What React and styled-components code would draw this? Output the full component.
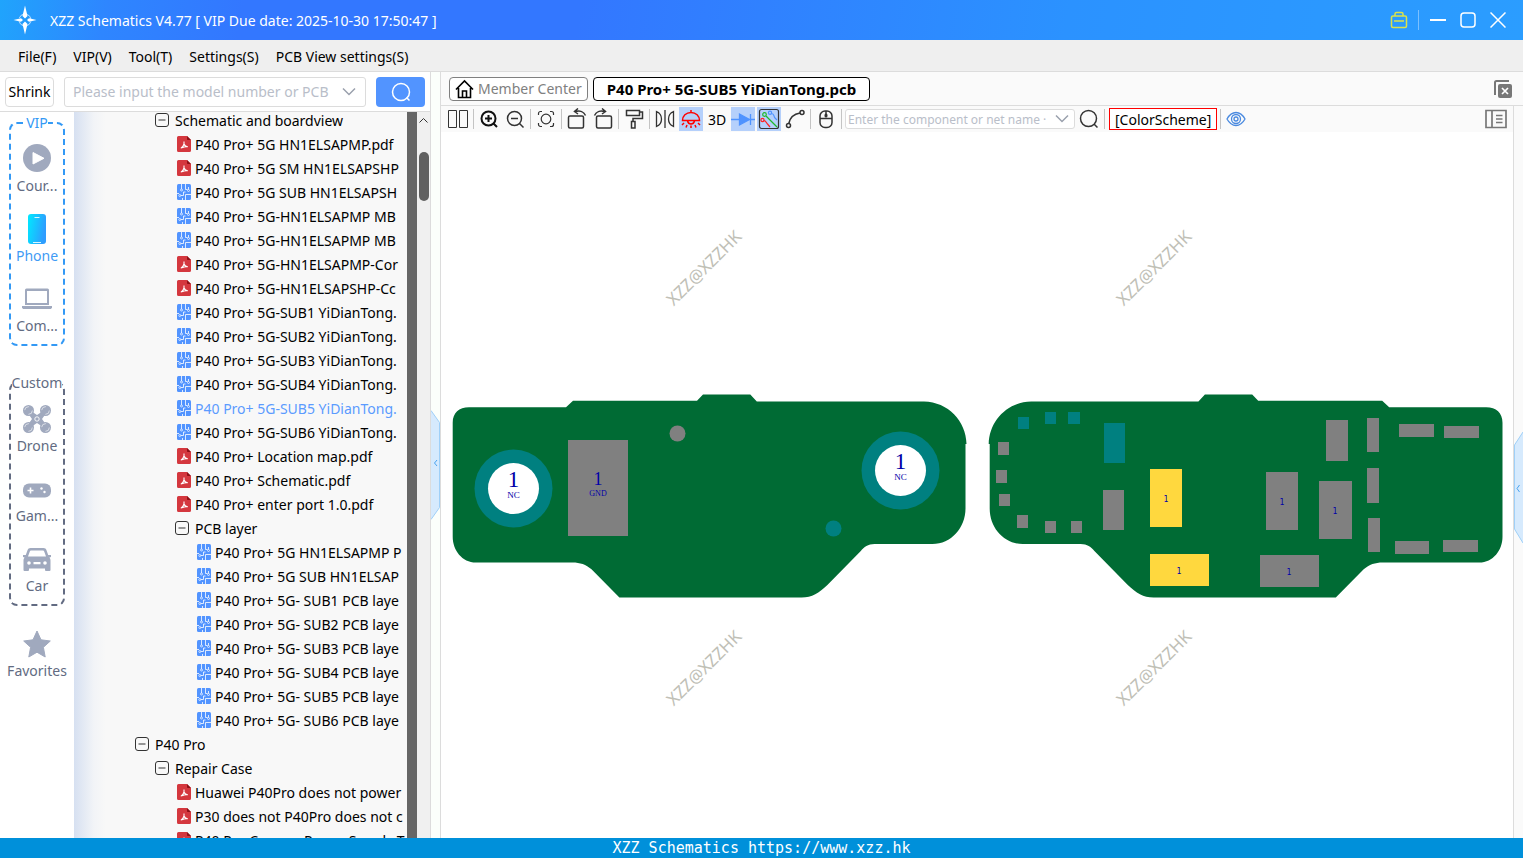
import React, { useState } from 'react';
import styled, { createGlobalStyle, css } from 'styled-components';

const COLORS = {
  primary: '#5294ff',
  selected: '#5b9bff',
  line: '#dcdcdc',
  panel: '#f8f8f8',
  rail: '#a0a9be',
  railText: '#626b82',
  board: '#006b34',
  pad: '#808080',
  teal: '#008080',
  yellow: '#ffd83e',
  pin: '#0000a8',
};

const GlobalStyle = createGlobalStyle`
  * { box-sizing: border-box; }
  body {
    margin: 0;
    font-family: 'Noto Sans', 'Open Sans', sans-serif;
    font-size: 14px;
    color: #000;
  }
  button, input {
    font-family: inherit;
    font-size: inherit;
    color: inherit;
  }
  svg { display: block; flex: none; }
`;

const Page = styled.div`
  height: 100vh;
  display: flex;
  flex-direction: column;
  overflow: hidden;
  background: #fff;
`;

const TitleBar = styled.header`
  height: 40px;
  flex: none;
  display: flex;
  align-items: center;
  padding: 0 14px 0 10px;
  background: linear-gradient(100deg, #20a4fc 0%, #2e86ff 7%, #3377ff 16%, #3377ff 38%, #2b92ff 70%, #2b9dff 100%);
  color: #fff;
`;

const AppTitle = styled.h1`
  flex: 1;
  margin: 0 0 0 10px;
  font-size: 14px;
  font-weight: 400;
`;

const WindowBtns = styled.div`
  display: flex;
  align-items: center;
  gap: 8px;
`;

const WindowBtn = styled.button`
  width: 22px;
  height: 24px;
  padding: 0;
  border: 0;
  background: transparent;
  display: grid;
  place-items: center;
`;

const WindowSep = styled.span`
  width: 1px;
  height: 20px;
  background: #7cc0ff;
`;

const MenuBar = styled.nav`
  height: 32px;
  flex: none;
  display: flex;
  align-items: center;
  gap: 17px;
  padding: 2px 18px 0;
  background: #efefef;
  border-bottom: 1px solid ${COLORS.line};
`;

const MenuItem = styled.button`
  padding: 0;
  border: 0;
  background: transparent;
`;

const Body = styled.div`
  flex: 1;
  min-height: 0;
  display: flex;
`;

const Side = styled.aside`
  width: 431px;
  flex: none;
  display: flex;
  flex-direction: column;
  border-right: 1px solid ${COLORS.line};
`;

const SearchRow = styled.form`
  height: 40px;
  flex: none;
  display: flex;
  align-items: center;
  gap: 10px;
  padding: 0 5px;
  border-bottom: 1px solid ${COLORS.line};
`;

const ShrinkBtn = styled.button`
  width: 49px;
  height: 30px;
  padding: 0;
  border: 1px solid ${COLORS.line};
  border-radius: 4px;
  background: #fff;
`;

const Combo = styled.label`
  display: flex;
  align-items: center;
  flex: ${p => (p.$small ? 'none' : 1)};
  width: ${p => (p.$small ? '230px' : 'auto')};
  min-width: 0;
  height: ${p => (p.$small ? '20px' : '30px')};
  padding: ${p => (p.$small ? '0 5px 0 2px' : '0 9px 0 8px')};
  font-size: ${p => (p.$small ? '12px' : '14px')};
  gap: ${p => (p.$small ? '5px' : '6px')};
  border: 1px solid ${COLORS.line};
  border-radius: 3px;
  background: #fff;
`;

const ComboInput = styled.input`
  flex: 1;
  min-width: 0;
  padding: 0;
  border: 0;
  outline: 0;
  background: transparent;

  &::placeholder {
    color: #b9bec9;
    opacity: 1;
  }
`;

const SearchBtn = styled.button`
  width: 49px;
  height: 30px;
  padding: 0;
  border: 0;
  border-radius: 4px;
  background: ${COLORS.primary};
  display: grid;
  place-items: center;
`;

const SideBody = styled.div`
  flex: 1;
  min-height: 0;
  display: flex;
`;

const Rail = styled.nav`
  width: 74px;
  flex: none;
  display: flex;
  flex-direction: column;
  align-items: center;
`;

const RailGroup = styled.fieldset`
  width: 56px;
  min-width: 0;
  margin: 0 0 26px;
  padding: 0;
  border: 2px dashed ${p => p.$color};
  border-radius: 8px;
  color: ${p => p.$color};

  & + & {
    margin-bottom: 13px;
  }
`;

const RailLegend = styled.legend`
  height: 22px;
  margin: 0 auto;
  padding: 0;
  line-height: 22px;
`;

const RailItem = styled.button`
  width: 100%;
  height: 70px;
  padding: 10px 0 0;
  border: 0;
  background: transparent;
  display: flex;
  flex-direction: column;
  align-items: center;
  line-height: 24px;
  white-space: nowrap;
  color: ${p => (p.$active ? '#3f9bf5' : COLORS.railText)};
`;

const Tree = styled.div`
  flex: 1;
  min-width: 0;
  overflow: hidden;
  background: linear-gradient(90deg, #d6e0f1 0, #e4eaf4 10px, #f2f4f7 20px, ${COLORS.panel} 32px);
`;

const TreeList = styled.ul`
  margin: -4px 1px 0 0;
  padding: 0;
  list-style: none;
  overflow: hidden;
`;

const TreeRow = styled.li`
  height: 24px;
  padding-left: ${p => 61 + p.$level * 20}px;
  display: flex;
  align-items: center;
  gap: 4px;
  white-space: nowrap;
  cursor: pointer;
  color: ${p => (p.$active ? COLORS.selected : '#000')};
`;

const TreeIcon = styled.span`
  width: 16px;
  flex: none;
  display: flex;
  justify-content: ${p => (p.$folder ? 'flex-start' : 'flex-end')};
`;

const Splitter = styled.div`
  width: 10px;
  flex: none;
  background: #666;
`;

const ScrollTrack = styled.div`
  width: 13px;
  flex: none;
  display: flex;
  flex-direction: column;
  align-items: center;
  gap: 29px;
  padding-top: 6px;
  background: #f0f0f0;
`;

const ScrollThumb = styled.div`
  width: 10px;
  height: 49px;
  border-radius: 5px;
  background: #606060;
`;

const Gap = styled.div`
  position: relative;
  width: 9px;
  flex: none;
  background: ${p => (p.$right ? '#fafafa' : '#fbfffb')};
`;

const Handle = styled.button`
  position: absolute;
  top: ${p => (p.$right ? '326px' : '338px')};
  left: 0;
  padding: 0;
  border: 0;
  background: transparent;
`;

const Main = styled.main`
  flex: 1;
  min-width: 0;
  display: flex;
  flex-direction: column;
  border-left: 1px solid ${COLORS.line};
`;

const TabRow = styled.div`
  height: 34px;
  flex: none;
  display: flex;
  align-items: center;
  gap: 5px;
  padding: 0 10px 0 8px;
  background: #fafafa;
  border-bottom: 1px solid ${COLORS.line};
`;

const Tab = styled.button`
  height: 24px;
  padding: 0 5px;
  display: flex;
  align-items: center;
  gap: 4px;
  border: 1px solid #808080;
  border-radius: 4px;
  background: #fff;
  color: #808080;

  ${p => p.$active && css`
    padding: 0 13px;
    border-color: #000;
    color: #000;
    font-size: 15px;
    font-weight: 700;
  `}
`;

const PlainBtn = styled.button`
  margin-left: auto;
  padding: 0;
  border: 0;
  background: transparent;
`;

const Work = styled.div`
  flex: 1;
  min-height: 0;
  display: flex;
`;

const View = styled.section`
  flex: 1;
  min-width: 0;
  display: flex;
  flex-direction: column;
  border-right: 1px solid ${COLORS.line};
`;

const ToolBar = styled.div`
  height: 26px;
  flex: none;
  display: flex;
  align-items: center;
  gap: 2px;
  padding: 0 5px;
  background: #fafafa;
`;

const Tool = styled.button`
  width: 24px;
  height: 24px;
  flex: none;
  padding: 0;
  border: 0;
  display: grid;
  place-items: center;
  margin-left: ${p => (p.$end ? 'auto' : 0)};
  background: ${p => (p.$on ? '#b5d0fb' : 'transparent')};
`;

const ToolSep = styled.span`
  width: 1px;
  height: 20px;
  flex: none;
  margin: 0 1px;
  background: #c4c4c4;
`;

const SchemeBtn = styled.button`
  height: 22px;
  flex: none;
  margin-left: 1px;
  padding: 0 5px;
  border: 1px solid #f00;
  background: #fff;
`;

const Canvas = styled.svg`
  flex: 1;
  width: 100%;
  min-height: 0;
`;

const Footer = styled.footer`
  height: 20px;
  flex: none;
  display: grid;
  place-items: center;
  padding-top: 1px;
  background: #0090da;
  color: #fff;
  font-family: 'DejaVu Sans Mono', monospace;
  font-size: 15px;
  line-height: 19px;
`;

// names are cut to the width of the list
const ROWS = [
  { level: 1, type: 'folder', text: 'Schematic and boardview' },
  { level: 2, type: 'pdf', text: 'P40 Pro+ 5G HN1ELSAPMP.pdf' },
  { level: 2, type: 'pdf', text: 'P40 Pro+ 5G SM HN1ELSAPSHP' },
  { level: 2, type: 'pcb', text: 'P40 Pro+ 5G SUB HN1ELSAPSH' },
  { level: 2, type: 'pcb', text: 'P40 Pro+ 5G-HN1ELSAPMP MB' },
  { level: 2, type: 'pcb', text: 'P40 Pro+ 5G-HN1ELSAPMP MB' },
  { level: 2, type: 'pdf', text: 'P40 Pro+ 5G-HN1ELSAPMP-Cor' },
  { level: 2, type: 'pdf', text: 'P40 Pro+ 5G-HN1ELSAPSHP-Cc' },
  { level: 2, type: 'pcb', text: 'P40 Pro+ 5G-SUB1 YiDianTong.' },
  { level: 2, type: 'pcb', text: 'P40 Pro+ 5G-SUB2 YiDianTong.' },
  { level: 2, type: 'pcb', text: 'P40 Pro+ 5G-SUB3 YiDianTong.' },
  { level: 2, type: 'pcb', text: 'P40 Pro+ 5G-SUB4 YiDianTong.' },
  { level: 2, type: 'pcb', text: 'P40 Pro+ 5G-SUB5 YiDianTong.' },
  { level: 2, type: 'pcb', text: 'P40 Pro+ 5G-SUB6 YiDianTong.' },
  { level: 2, type: 'pdf', text: 'P40 Pro+ Location map.pdf' },
  { level: 2, type: 'pdf', text: 'P40 Pro+ Schematic.pdf' },
  { level: 2, type: 'pdf', text: 'P40 Pro+ enter port 1.0.pdf' },
  { level: 2, type: 'folder', text: 'PCB layer' },
  { level: 3, type: 'pcb', text: 'P40 Pro+ 5G HN1ELSAPMP P' },
  { level: 3, type: 'pcb', text: 'P40 Pro+ 5G SUB HN1ELSAP' },
  { level: 3, type: 'pcb', text: 'P40 Pro+ 5G- SUB1 PCB laye' },
  { level: 3, type: 'pcb', text: 'P40 Pro+ 5G- SUB2 PCB laye' },
  { level: 3, type: 'pcb', text: 'P40 Pro+ 5G- SUB3 PCB laye' },
  { level: 3, type: 'pcb', text: 'P40 Pro+ 5G- SUB4 PCB laye' },
  { level: 3, type: 'pcb', text: 'P40 Pro+ 5G- SUB5 PCB laye' },
  { level: 3, type: 'pcb', text: 'P40 Pro+ 5G- SUB6 PCB laye' },
  { level: 0, type: 'folder', text: 'P40 Pro' },
  { level: 1, type: 'folder', text: 'Repair Case' },
  { level: 2, type: 'pdf', text: 'Huawei P40Pro does not power' },
  { level: 2, type: 'pdf', text: 'P30 does not P40Pro does not c' },
  { level: 2, type: 'pdf', text: 'P40 Pro Camera Power Supply T' },
];

const rowIcons = {
  folder: (
    <svg width="14" height="14" viewBox="0 0 14 14" fill="none" stroke="#333">
      <rect x="0.5" y="0.5" width="13" height="13" rx="2.5" />
      <path d="M3.5 7h7" />
    </svg>
  ),
  pdf: (
    <svg width="14" height="16" viewBox="0 0 14 16" fill="none">
      <path d="M1.5 0H10l4 4v10.500a1.500 1.500 0 0 1-1.500 1.500h-11A1.500 1.500 0 0 1 0 14.500v-13A1.500 1.500 0 0 1 1.500 0z" fill="#d4373e" />
      <path d="M10 0l4 4h-3.200A.8.8 0 0 1 10 3.200z" fill="#8c1016" />
      <path d="M7 5.500v2.500c-.5 1.800-1.800 3.600-3.200 4.200M7 8c.6 1.500 1.900 2.800 3.800 2.800-2-.3-4.200.1-5.600 1" stroke="#fff" strokeWidth="1.100" />
    </svg>
  ),
  pcb: (
    <svg width="14" height="16" viewBox="0 0 14 16" fill="none">
      <rect width="14" height="16" rx="1.500" fill={COLORS.primary} />
      <path d="M4.500 0v5M8.500 0v5.500h2M0 9.500h2M3.800 11.500h2.700V8h2M8.500 16v-5.500h5.500M11.500 5.500V3M5.500 16v-2" stroke="#fff" strokeWidth="0.800" />
      <circle cx="4.500" cy="6" r="1" stroke="#fff" strokeWidth="0.700" />
      <circle cx="2.800" cy="11.500" r="1" stroke="#fff" strokeWidth="0.700" />
      <circle cx="11.500" cy="6.500" r="1" stroke="#fff" strokeWidth="0.700" />
    </svg>
  ),
};

const railIcons = {
  course: (
    <svg width="28" height="30" viewBox="0 0 28 30">
      <circle cx="14" cy="14" r="14" fill={COLORS.rail} />
      <path d="M10 8.500v11.500l11-5.700z" fill="#fff" stroke="#fff" strokeLinejoin="round" />
    </svg>
  ),
  phone: (
    <svg width="18" height="30" viewBox="0 0 18 30">
      <defs>
        <linearGradient id="phoneFill" x1="0" y1="0" x2="1" y2="0.300">
          <stop offset="0" stopColor="#00eaff" />
          <stop offset="1" stopColor="#2e9dff" />
        </linearGradient>
      </defs>
      <rect width="18" height="30" rx="3" fill="url(#phoneFill)" />
      <path d="M6.500 3.500h5M5 28.500h8" stroke="#d8f7ff" />
    </svg>
  ),
  computer: (
    <svg width="30" height="30" viewBox="0 0 30 30">
      <path d="M3 6a1.500 1.500 0 0 1 1.500-1.500h21A1.500 1.500 0 0 1 27 6v15H3zM5 7v12h20V7z" fill={COLORS.rail} fillRule="evenodd" />
      <path d="M0 22h30v1.500l-1 1.500H1L0 23.500z" fill={COLORS.rail} />
    </svg>
  ),
  drone: (
    <svg width="28" height="30" viewBox="0 0 28 30" fill={COLORS.rail}>
      <path d="M5 5l9 6 9-6 1 3-5 7 5 7-1 3-9-6-9 6-1-3 5-7-5-7z" />
      {[[5.5, 6.5], [22.5, 6.5], [5.5, 23.5], [22.5, 23.5]].map(([x, y]) => (
        <g key={`${x}-${y}`}>
          <circle cx={x} cy={y} r="5.500" />
          <circle cx={x} cy={y} r="3.800" fill="none" stroke="#fff" strokeWidth="0.600" strokeDasharray="6 6" />
        </g>
      ))}
      <circle cx="14" cy="15" r="2.200" fill="none" stroke="#fff" strokeWidth="0.900" />
    </svg>
  ),
  game: (
    <svg width="28" height="30" viewBox="0 0 28 30">
      <rect y="9.500" width="28" height="14" rx="6" fill={COLORS.rail} />
      <path d="M4.500 16.500h6M7.500 13.500v6" stroke="#fff" strokeWidth="1.600" />
      <circle cx="18.500" cy="14.500" r="1.200" fill="#fff" />
      <circle cx="21.500" cy="18" r="1.200" fill="#fff" />
    </svg>
  ),
  car: (
    <svg width="28" height="30" viewBox="0 -1 28 30" fill={COLORS.rail}>
      <path fillRule="evenodd" d="M7.500 3h13c1.500 0 2.500.8 3 2.200L25.200 10H28v2l-1.500.6c.5.900 1 1.700 1 2.900V25a1 1 0 0 1-1 1H23a1 1 0 0 1-1-1v-1.500H6V25a1 1 0 0 1-1 1H1.500a1 1 0 0 1-1-1v-9.500c0-1.200.5-2 1-2.900L0 12v-2h2.800l1.700-4.800C5 3.800 6 3 7.500 3zm.5 2.500c-.6 0-1 .3-1.200.9L5 11.500h18l-1.800-5.100c-.2-.6-.6-.9-1.200-.9zM6 16.200a1.800 1.800 0 1 0 0 3.600 1.800 1.800 0 0 0 0-3.600zm16 0a1.800 1.800 0 1 0 0 3.600 1.800 1.800 0 0 0 0-3.600zM10.500 17v2.200h7V17z" />
    </svg>
  ),
  star: (
    <svg width="28" height="30" viewBox="0 0 28 30">
      <path d="M14 2l4 8.800 9.300 1.200-6.900 6.300L22.200 28 14 23.200 5.800 28l1.800-9.700L.7 12l9.300-1.200z" fill={COLORS.rail} stroke={COLORS.rail} strokeLinejoin="round" />
    </svg>
  ),
};

const VIP_ITEMS = [
  { icon: 'course', label: 'Cour...' },
  { icon: 'phone', label: 'Phone' },
  { icon: 'computer', label: 'Com...' },
];

const CUSTOM_ITEMS = [
  { icon: 'drone', label: 'Drone' },
  { icon: 'game', label: 'Gam...' },
  { icon: 'car', label: 'Car' },
];

const Icon = ({ children, color = '#333', width = 1.5, size = 22 }) => (
  <svg width={size} height={size} viewBox="0 0 22 22" fill="none" stroke={color} strokeWidth={width}>
    {children}
  </svg>
);

const Chevron = () => (
  <svg width="14" height="10" viewBox="0 0 14 10" fill="none" stroke="#9aa0ad" strokeWidth="1.500">
    <path d="M1 1.500l6 6 6-6" />
  </svg>
);

// null is a separator
const TOOLS = [
  { id: 'split', icon: <Icon width={1}><path d="M1.500 2.500h8v17h-8zM12.500 2.500h8v17h-8z" /></Icon> },
  null,
  { id: 'zoom in', icon: <Icon width={2} color="#111"><circle cx="10.500" cy="10.500" r="7" /><path d="M15.500 15.500l3.500 3.500M7 10.500h7M10.500 7v7" /></Icon> },
  { id: 'zoom out', icon: <Icon><circle cx="10.500" cy="10.500" r="7" /><path d="M15.500 15.500l4 4M7 10.500h7" /></Icon> },
  null,
  { id: 'fit', icon: <Icon width={1.2}><path d="M3.500 7V5.500a2 2 0 0 1 2-2H7M15 3.500h1.500a2 2 0 0 1 2 2V7M18.500 15v1.500a2 2 0 0 1-2 2H15M7 18.500H5.500a2 2 0 0 1-2-2V15" /><circle cx="11" cy="11" r="4.800" /></Icon> },
  null,
  { id: 'rotate left', icon: <Icon><rect x="2.500" y="8" width="15" height="12" rx="1.500" /><path d="M9 3.500c5-1.500 9 .5 10.500 4M12 .500L8.500 3.500 12 6" /></Icon> },
  { id: 'rotate right', icon: <Icon><rect x="4.500" y="8" width="15" height="12" rx="1.500" /><path d="M13 3.500c-5-1.500-9 .5-10.500 4M10 .500l3.500 3L10 6" /></Icon> },
  null,
  { id: 'paint', icon: <Icon><path d="M3.500 2.500h13v5h-13zM16.500 4h3v6.500H10v3M8.500 13.500h3.500v6.500H8.500z" /></Icon> },
  null,
  { id: 'mirror', icon: <Icon width={1.3}><path d="M2.500 3.500v15c3.500-1.500 5-4 5-7.500s-1.500-6-5-7.500zM11 2v18M19.500 3.500v15c-3.500-1.500-5-4-5-7.500s1.500-6 5-7.500z" /></Icon> },
  { id: 'lamp', on: true, icon: <Icon color="#f00"><path d="M2.500 12.500c0-4.500 3.500-8 8.500-8s8.500 3.500 8.500 8zM11 2v2.500M7.500 13c.5 2 1.500 3 3.500 3s3-1 3.500-3M4 15l-2 2M18 15l2 2M7 17l-1 2.500M15 17l1 2.500M11 17.500V20" /></Icon> },
  { id: '3D' },
  { id: 'diode', on: true, icon: <svg width="24" height="24" viewBox="0 0 24 24" fill="#4f93ff" stroke="#4f93ff" strokeWidth="1.300"><path d="M0 12.500h24M8.500 7v11l10-5.500zM19.500 7v11" /></svg> },
  {
    id: 'nets',
    on: true,
    icon: (
      <Icon width={1.2}>
        <rect x="1.500" y="1.500" width="19" height="19" rx="2" />
        <path d="M8 8l11 11" stroke="#1fb92a" /><circle cx="6.500" cy="6.500" r="1.800" stroke="#1fb92a" />
        <path d="M13.500 5.500c3 0 2 3 3.500 4.500l2 2" stroke="#4f93ff" /><circle cx="12" cy="4.800" r="1.600" stroke="#4f93ff" />
        <path d="M5.500 12.500c3 0 2.500 2.500 4 3.500l2.500 3" stroke="#f22" /><circle cx="4.500" cy="12" r="1.600" stroke="#f22" />
      </Icon>
    ),
  },
  { id: 'curve', icon: <Icon><circle cx="18" cy="4.500" r="2" /><circle cx="4.500" cy="17.500" r="2" /><path d="M16 5C9.500 6 6 9.500 4.800 15.500" /></Icon> },
  null,
  { id: 'mouse', icon: <Icon><rect x="5" y="3" width="12" height="16.500" rx="5" /><path d="M5 10.500h12M11 3v3" /><rect x="9.500" y="5.500" width="3" height="4" rx="1.500" fill="#333" stroke="none" /></Icon> },
  null,
];

const BOARD =
  'M452.700 422.700C452.700 413 459 407.300 469 407.300H566L573 400.700H697L703 394.500H750.300L756.800 401.500H924' +
  'C948 402 966 421 966.500 444H965.500V508.500C965.500 528 951 544 932.400 544H874.500C868 544 864 547 860.800 551' +
  'L827.400 585C819 593 812 597.500 801.600 597.500H619.400L591.500 569.300C586 564.500 580 562.500 572.600 562.500H476' +
  'C462 562.500 452.700 550 452.700 536.700Z';

// [x, y, width, height]
const TEAL_PADS = [
  [1018, 417, 11, 12], [1045, 412, 11, 12], [1068, 412, 12, 12], [1104, 423, 21, 40],
];

const GRAY_PADS = [
  [568, 440, 60, 96], [998, 442, 11, 13], [996, 470, 11, 13], [999, 494, 11, 12], [1017, 515, 11, 13],
  [1045, 521, 11, 12], [1071, 521, 11, 12], [1103, 490, 21, 40], [1326, 420, 22, 41], [1367, 418, 12, 34],
  [1367, 468, 12, 35], [1368, 518, 12, 34], [1399, 424, 35, 13], [1444, 426, 35, 12], [1395, 541, 34, 13],
  [1443, 540, 35, 12], [1266, 472, 32, 58], [1319, 481, 33, 58], [1260, 555, 59, 32],
];

const YELLOW_PADS = [[1150, 469, 32, 58], [1150, 554, 59, 32]];

const PIN_LABELS = [[1166, 502], [1179, 574], [1282, 505], [1335, 514], [1289, 575]];

const WATERMARKS = [[704, 268], [1154, 268], [704, 668], [1154, 668]];

const Pads = ({ items, fill }) => items.map(([x, y, w, h]) => (
  <rect key={`${x}-${y}`} x={x} y={y} width={w} height={h} fill={fill} shapeRendering="crispEdges" />
));

const MountHole = ({ x, y }) => (
  <g>
    <circle cx={x} cy={y} r="39" fill={COLORS.teal} />
    <circle cx={x} cy={y} r="25.500" fill="#fff" />
    <text x={x} y={y - 2} fontSize="23">1</text>
    <text x={x} y={y + 9} fontSize="9">NC</text>
  </g>
);

function BoardView() {
  return (
    <Canvas viewBox="441 132 1072 706" role="img" aria-label="Board view">
      <path d={BOARD} fill={COLORS.board} />
      <path d={BOARD} fill={COLORS.board} transform="translate(1955.200 0) scale(-1 1)" />
      <Pads items={TEAL_PADS} fill={COLORS.teal} />
      <Pads items={GRAY_PADS} fill={COLORS.pad} />
      <Pads items={YELLOW_PADS} fill={COLORS.yellow} />
      <circle cx="677.500" cy="433.500" r="8" fill={COLORS.pad} />
      <circle cx="833.500" cy="528.500" r="8" fill={COLORS.teal} />
      <g fill={COLORS.pin} textAnchor="middle" fontFamily="'Liberation Serif', serif">
        <MountHole x={513.5} y={488.5} />
        <MountHole x={900.5} y={470.5} />
        <text x="598" y="485" fontSize="18">1</text>
        <text x="598" y="496" fontSize="8">GND</text>
      </g>
      <g fill={COLORS.pin} textAnchor="middle" fontFamily="'DejaVu Sans Mono', monospace" fontSize="8">
        {PIN_LABELS.map(([x, y]) => <text key={x} x={x} y={y}>1</text>)}
      </g>
      <g fill="#c0c0b6" textAnchor="middle" fontSize="17">
        {WATERMARKS.map(([x, y]) => (
          <text key={`${x}-${y}`} transform={`translate(${x} ${y}) rotate(-45)`} dy="6">XZZ@XZZHK</text>
        ))}
      </g>
    </Canvas>
  );
}

function RailButton({ item, active, onClick }) {
  return (
    <RailItem type="button" $active={active} onClick={onClick}>
      {railIcons[item.icon]}
      {item.label}
    </RailItem>
  );
}

export default function App() {
  const [category, setCategory] = useState('phone');
  const [selected, setSelected] = useState(12);

  const renderRail = item => (
    <RailButton key={item.icon} item={item} active={category === item.icon} onClick={() => setCategory(item.icon)} />
  );

  return (
    <Page>
      <GlobalStyle />
      <TitleBar>
        <svg width="30" height="32" viewBox="0 0 30 32" fill="#fff">
          <circle cx="15" cy="16" r="6" fill="none" stroke="#bfe0ff" strokeWidth="1" strokeDasharray="6 3.400" strokeDashoffset="-1.700" />
          <path d="M15 1.500L17.500 12 15 14.500 12.500 12zM15 30.500L17.500 20 15 17.500 12.500 20zM3.500 16L11 14.200 13 16l-2 1.800zM26.500 16L19 14.200 17 16l2 1.800z" />
        </svg>
        <AppTitle>XZZ Schematics V4.77 [ VIP Due date: 2025-10-30 17:50:47 ]</AppTitle>
        <WindowBtns>
          <WindowBtn aria-label="Toolbox">
            <svg width="18" height="18" viewBox="0 0 18 18" fill="none" stroke="#dbe24a" strokeWidth="1.500">
              <rect x="1.500" y="5" width="15" height="11.500" rx="1.500" />
              <path d="M5 5V3a1.500 1.500 0 0 1 1.500-1.500h5A1.500 1.500 0 0 1 13 3v2M4 10h10" />
            </svg>
          </WindowBtn>
          <WindowSep />
          <WindowBtn aria-label="Minimize">
            <svg width="16" height="16" viewBox="0 0 16 16" stroke="#fff" strokeWidth="2"><path d="M0 8h16" /></svg>
          </WindowBtn>
          <WindowBtn aria-label="Maximize">
            <svg width="16" height="16" viewBox="0 0 16 16" fill="none" stroke="#fff" strokeWidth="1.500"><rect x="1" y="1" width="14" height="14" rx="3" /></svg>
          </WindowBtn>
          <WindowBtn aria-label="Close">
            <svg width="16" height="16" viewBox="0 0 16 16" stroke="#fff" strokeWidth="1.500"><path d="M.5.500l15 15M15.500.500l-15 15" /></svg>
          </WindowBtn>
        </WindowBtns>
      </TitleBar>

      <MenuBar>
        {['File(F)', 'VIP(V)', 'Tool(T)', 'Settings(S)', 'PCB View settings(S)'].map(label => (
          <MenuItem key={label}>{label}</MenuItem>
        ))}
      </MenuBar>

      <Body>
        <Side>
          <SearchRow onSubmit={e => e.preventDefault()}>
            <ShrinkBtn type="button">Shrink</ShrinkBtn>
            <Combo>
              <ComboInput aria-label="Model search" placeholder="Please input the model number or PCB" />
              <Chevron />
            </Combo>
            <SearchBtn aria-label="Search">
              <svg width="22" height="22" viewBox="0 0 22 22" fill="none" stroke="#fff" strokeWidth="1.500">
                <circle cx="11" cy="11" r="8.500" /><path d="M16.500 16.500l3 3" />
              </svg>
            </SearchBtn>
          </SearchRow>
          <SideBody>
            <Rail>
              <RailGroup $color="#3399f5">
                <RailLegend>VIP</RailLegend>
                {VIP_ITEMS.map(renderRail)}
              </RailGroup>
              <RailGroup $color={COLORS.railText}>
                <RailLegend>Custom</RailLegend>
                {CUSTOM_ITEMS.map(renderRail)}
              </RailGroup>
              {renderRail({ icon: 'star', label: 'Favorites' })}
            </Rail>
            <Tree>
              <TreeList>
                {ROWS.map((row, i) => (
                  <TreeRow key={i} $level={row.level} $active={i === selected} onClick={() => setSelected(i)}>
                    <TreeIcon $folder={row.type === 'folder'}>{rowIcons[row.type]}</TreeIcon>
                    {row.text}
                  </TreeRow>
                ))}
              </TreeList>
            </Tree>
            <Splitter />
            <ScrollTrack>
              <svg width="9" height="5" viewBox="0 0 9 5" fill="none" stroke="#333"><path d="M.5 4.500l4-4 4 4" /></svg>
              <ScrollThumb />
            </ScrollTrack>
          </SideBody>
        </Side>

        <Gap>
          <Handle aria-label="Collapse list">
            <svg width="9" height="110" viewBox="0 0 9 110" fill="#d6eafd" stroke="#9fd0f8">
              <path d="M0 .5l8.500 12v85L0 109.500" />
              <path d="M6 50L3.500 53 6 56" fill="none" stroke="#4aa3f0" />
            </svg>
          </Handle>
        </Gap>

        <Main>
          <TabRow>
            <Tab>
              <svg width="19" height="20" viewBox="0 0 19 20" fill="none" stroke="#000" strokeWidth="1.600">
                <path d="M1 10.500L9.500 2 18 10.500M3.500 9v9.500h12V9M7.500 18v-6h4v6" />
              </svg>
              Member Center
            </Tab>
            <Tab $active>P40 Pro+ 5G-SUB5 YiDianTong.pcb</Tab>
            <PlainBtn aria-label="Close all tabs">
              <svg width="20" height="20" viewBox="0 0 20 20" fill="none" stroke="#777" strokeWidth="2">
                <path d="M2 16V3.500A1.500 1.500 0 0 1 3.500 2H16" />
                <rect x="5" y="5" width="14" height="14" rx="2" fill="#777" stroke="none" />
                <path d="M9 9l6 6M15 9l-6 6" stroke="#fff" strokeWidth="1.700" />
              </svg>
            </PlainBtn>
          </TabRow>
          <Work>
            <View>
              <ToolBar>
                {TOOLS.map((tool, i) => (tool
                  ? <Tool key={tool.id} $on={tool.on} aria-label={tool.id}>{tool.icon || tool.id}</Tool>
                  : <ToolSep key={i} />
                ))}
                <Combo $small>
                  <ComboInput aria-label="Component search" placeholder="Enter the component or net name ·" />
                  <Chevron />
                </Combo>
                <Tool aria-label="Find"><Icon><circle cx="10.500" cy="10.500" r="8" /><path d="M16 16l3.500 3.500" /></Icon></Tool>
                <ToolSep />
                <SchemeBtn>[ColorScheme]</SchemeBtn>
                <ToolSep />
                <Tool aria-label="Visibility">
                  <Icon color="#4a8ae0" width={1.3}>
                    <path d="M2 11c2.500-4.500 5.500-6.500 9-6.500s6.500 2 9 6.500c-2.500 4.500-5.500 6.500-9 6.500S4.500 15.500 2 11z" />
                    <circle cx="11" cy="11" r="4.500" /><circle cx="11" cy="11" r="2" />
                  </Icon>
                </Tool>
                <Tool $end aria-label="Side panel">
                  <Icon color="#777" width={1.7}>
                    <path d="M1 2.500h20v17H1zM7 2.500v17" /><path d="M11 7.500h6.500M11 11h6.500M11 14.500h6.500" strokeWidth="1.300" />
                  </Icon>
                </Tool>
              </ToolBar>
              <BoardView />
            </View>
            <Gap $right>
              <Handle $right aria-label="Expand panel">
                <svg width="9" height="112" viewBox="0 0 9 112" fill="#d6eafd" stroke="#9fd0f8">
                  <path d="M9 0L.5 13v84L9 111" />
                  <path d="M5.500 53L3 56.500 5.500 60" fill="none" stroke="#4aa3f0" />
                </svg>
              </Handle>
            </Gap>
          </Work>
        </Main>
      </Body>

      <Footer>XZZ Schematics https://www.xzz.hk</Footer>
    </Page>
  );
}
